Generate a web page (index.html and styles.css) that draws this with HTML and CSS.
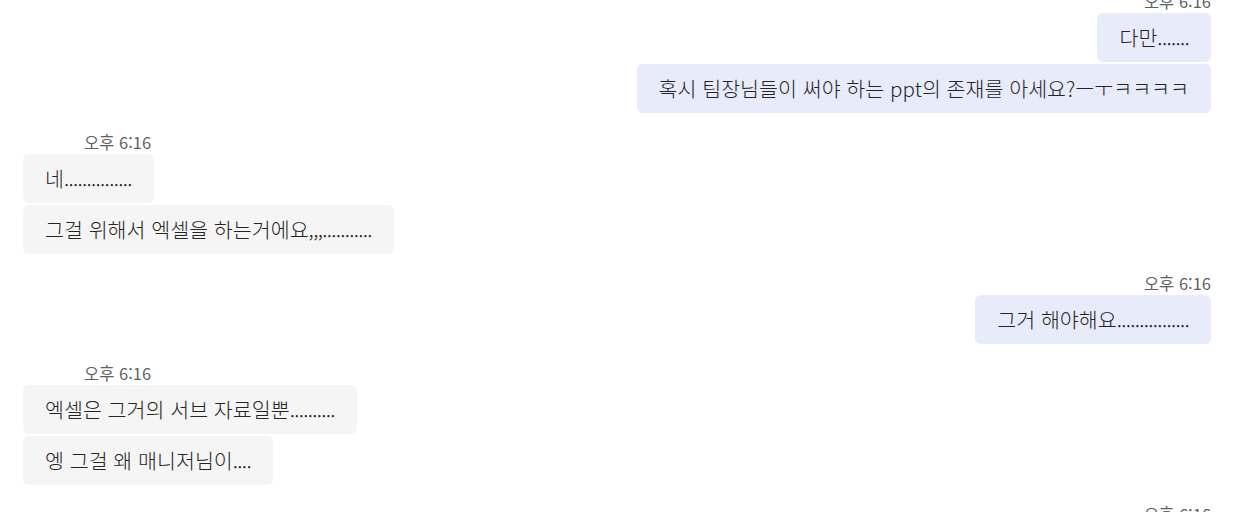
FILE: index.html
```html
<!DOCTYPE html>
<html lang="ko">
<head>
<meta charset="utf-8">
<link rel="stylesheet" href="styles.css">
</head>
<body>
<div class="chat">
  <div class="group mine first">
    <div class="time">오후 6:16</div>
    <div class="bubble">다만<span class="dots">.......</span></div>
    <div class="bubble">혹시 팀장님들이 써야 하는 ppt의 존재를 아세요?ㅡㅜㅋㅋㅋㅋ</div>
  </div>
  <div class="group other">
    <div class="time">오후 6:16</div>
    <div class="bubble">네<span class="dots">...............</span></div>
    <div class="bubble">그걸 위해서 엑셀을 하는거에요<span class="dots">,,,...........</span></div>
  </div>
  <div class="group mine">
    <div class="time">오후 6:16</div>
    <div class="bubble">그거 해야해요<span class="dots">................</span></div>
  </div>
  <div class="group other">
    <div class="time">오후 6:16</div>
    <div class="bubble">엑셀은 그거의 서브 자료일뿐<span class="dots">..........</span></div>
    <div class="bubble">엥 그걸 왜 매니저님이<span class="dots">....</span></div>
  </div>
  <div class="group mine">
    <div class="time">오후 6:16</div>
  </div>
</div>
</body>
</html>
```

FILE: styles.css
```css
html, body {
  margin: 0;
  padding: 0;
  background: #ffffff;
  overflow: hidden;
}
body {
  font-family: "Noto Sans CJK KR", "Noto Sans", sans-serif;
  color: #242424;
  width: 1242px;
  height: 512px;
}
.chat {
  display: flex;
  flex-direction: column;
  padding: 0 31px 0 23px;
  margin-top: -8px;
}
.group {
  display: flex;
  flex-direction: column;
  gap: 2px;
  margin-top: 20px;
}
.group.first {
  margin-top: 0;
}
.group.mine {
  align-items: flex-end;
}
.group.other {
  align-items: flex-start;
}
.time {
  font-size: 16.5px;
  line-height: 19px;
  color: #616161;
}
.group.other .time {
  margin-left: 61px;
}
.bubble {
  font-size: 20.6px;
  line-height: 25px;
  padding: 12px 22px;
  border-radius: 6px;
  white-space: nowrap;
  font-weight: 300;
}
.dots {
  letter-spacing: -0.65px;
}
.group.mine .bubble {
  background: #e8ebfa;
}
.group.other .bubble {
  background: #f5f5f5;
}
```
